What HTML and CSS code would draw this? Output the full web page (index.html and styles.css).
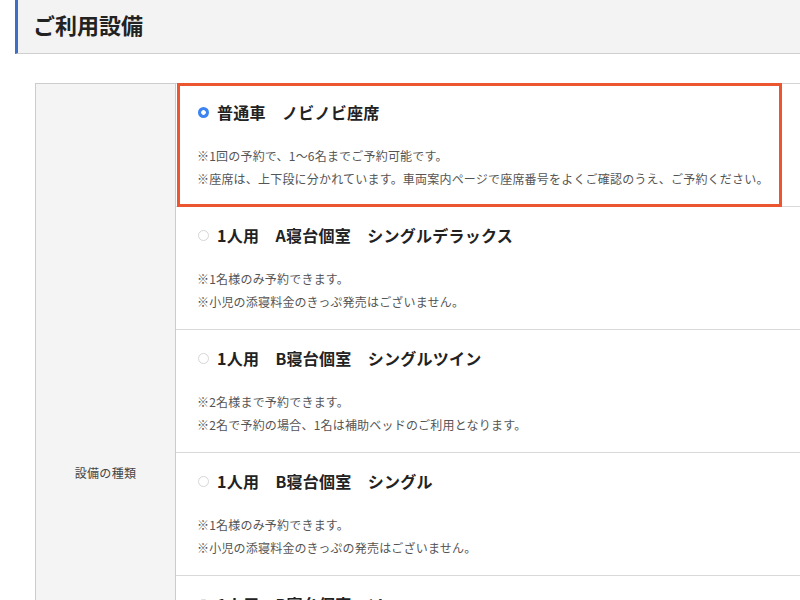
FILE: index.html
```html
<!DOCTYPE html>
<html lang="ja">
<head>
<meta charset="utf-8">
<title>ご利用設備</title>
<link rel="stylesheet" href="styles.css">
</head>
<body>
<header class="section-head">
  <h2 class="section-title">ご利用設備</h2>
</header>

<div class="facility">
  <div class="facility-label">設備の種類</div>
  <div class="options">
    <div class="option">
      <div class="option-box is-selected">
        <div class="option-title"><span class="radio is-checked"></span>普通車　ノビノビ座席</div>
        <p class="note">※1回の予約で、1〜6名までご予約可能です。</p>
        <p class="note">※座席は、上下段に分かれています。車両案内ページで座席番号をよくご確認のうえ、ご予約ください。</p>
      </div>
    </div>
    <div class="option">
      <div class="option-box">
        <div class="option-title"><span class="radio"></span>1人用　A寝台個室　シングルデラックス</div>
        <p class="note">※1名様のみ予約できます。</p>
        <p class="note">※小児の添寝料金のきっぷ発売はございません。</p>
      </div>
    </div>
    <div class="option">
      <div class="option-box">
        <div class="option-title"><span class="radio"></span>1人用　B寝台個室　シングルツイン</div>
        <p class="note">※2名様まで予約できます。</p>
        <p class="note">※2名で予約の場合、1名は補助ベッドのご利用となります。</p>
      </div>
    </div>
    <div class="option">
      <div class="option-box">
        <div class="option-title"><span class="radio"></span>1人用　B寝台個室　シングル</div>
        <p class="note">※1名様のみ予約できます。</p>
        <p class="note">※小児の添寝料金のきっぷの発売はございません。</p>
      </div>
    </div>
    <div class="option">
      <div class="option-box">
        <div class="option-title"><span class="radio"></span>1人用　B寝台個室　ソロ</div>
        <p class="note">※1名様のみ予約できます。</p>
        <p class="note">※小児の添寝料金のきっぷの発売はございません。</p>
      </div>
    </div>
    <div class="option">
      <div class="option-box">
        <div class="option-title"><span class="radio"></span>2人用　B寝台個室　サンライズツイン</div>
        <p class="note">※2名様で予約してください。</p>
        <p class="note">※1名様でのご利用はできません。</p>
        <p class="note">※小児の添寝料金のきっぷの発売はございません。</p>
        <p class="note">※上下段の指定はできません。</p>
      </div>
    </div>
  </div>
</div>
</body>
</html>
```

FILE: styles.css
```css
html, body {
  overflow: hidden;
}

body {
  margin: 0;
  background: #ffffff;
  color: #222222;
  font-family: "Noto Sans CJK JP", "Noto Sans", sans-serif;
}

.section-head {
  margin-left: 15px;
  height: 53px;
  background: #f3f3f3;
  border-left: 3px solid #3f6fc4;
  border-bottom: 1px solid #cfcfcf;
  box-sizing: content-box;
}

.section-title {
  margin: 0;
  padding: 9px 0 0 15px;
  font-size: 22px;
  line-height: 30px;
  font-weight: 700;
  color: #222222;
}

.facility {
  display: grid;
  grid-template-columns: 141px 1fr;
  margin: 29px 0 0 35px;
  width: 790px;
}

.facility-label {
  display: flex;
  align-items: center;
  justify-content: center;
  background: #f4f4f4;
  border: 1px solid #cccccc;
  font-size: 12px;
  letter-spacing: 0.3px;
  color: #444444;
  padding-bottom: 6px;
}

.options {
  border-top: 1px solid #d4d4d4;
}

.option {
  border-bottom: 1px solid #d9d9d9;
}

.option-box {
  width: 605px;
  box-sizing: border-box;
  margin-left: 1px;
  padding: 13px 0 13px 18px;
  border: 3px solid transparent;
}

.option-box.is-selected {
  border-color: #eb5530;
  margin-top: -1px;
  margin-bottom: -1px;
  padding-top: 14px;
  padding-bottom: 14px;
}

.option-title {
  display: flex;
  align-items: center;
  font-size: 16px;
  line-height: 24px;
  font-weight: 700;
  letter-spacing: 0.25px;
  color: #222222;
  margin-bottom: 20px;
}

.radio {
  flex: none;
  width: 11px;
  height: 11px;
  border-radius: 50%;
  box-sizing: border-box;
  border: 1px solid #d6d6d6;
  background: #ffffff;
  margin-right: 8px;
}

.radio.is-checked {
  border: none;
  background: radial-gradient(circle, #ffffff 0 2px, #3c84f2 2.6px);
}

.note {
  margin: 0 0 0 -1px;
  font-size: 12px;
  line-height: 23px;
  letter-spacing: 0.2px;
  color: #555555;
  white-space: nowrap;
}
```
